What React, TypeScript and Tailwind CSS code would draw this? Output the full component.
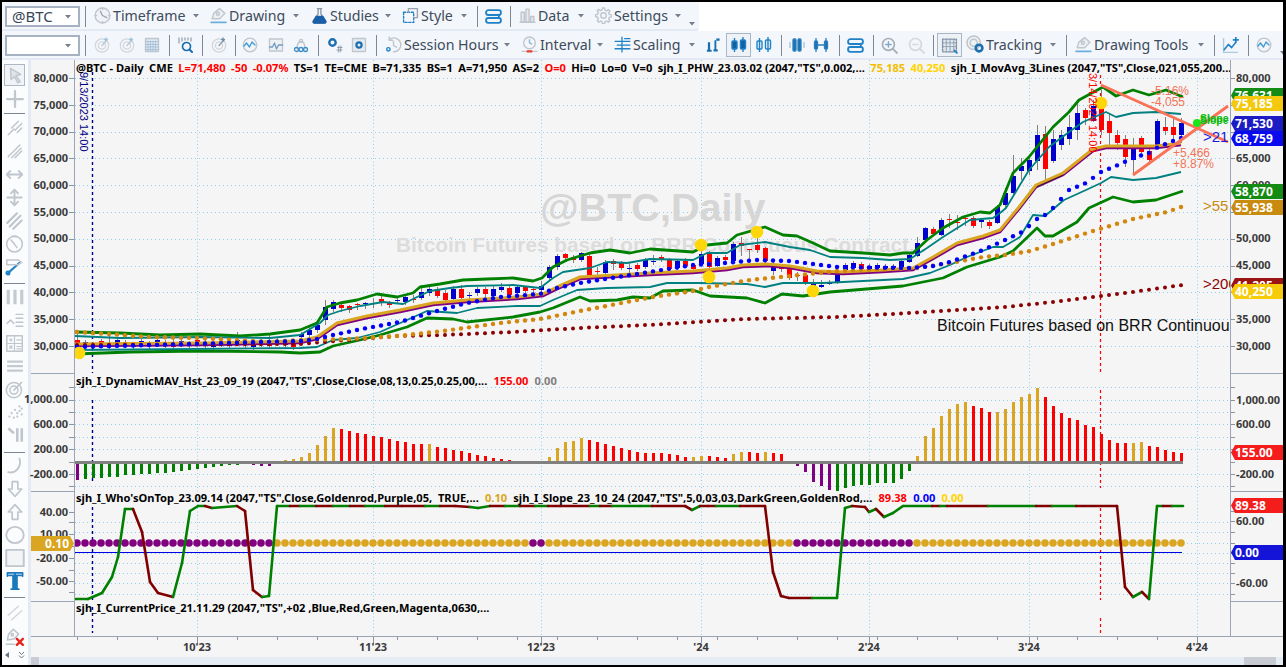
import React from "react";

type P = [number, number];
const lerp = (pts: P[], x: number) => {
  if (x <= pts[0][0]) return pts[0][1];
  for (let i = 1; i < pts.length; i++) {
    if (x <= pts[i][0]) {
      const [a, b] = pts[i - 1];
      const [c, d] = pts[i];
      return b + ((d - b) * (x - a)) / (c - a);
    }
  }
  return pts[pts.length - 1][1];
};
const toPath = (pts: P[]) => "M" + pts.map((p) => p[0] + " " + p[1]).join("L");
const barXs = Array.from({ length: 139 }, (_, i) => 77 + 8 * i);

const greenTop: P[] = [[75,332],[120,333],[160,335],[200,334],[240,336],[270,334],[285,332],[300,330],[317,323],[327,307],[340,303],[357,300],[377,294],[397,297],[413,293],[420,287],[440,284],[463,280],[487,279],[513,278],[533,281],[542,278],[553,267],[567,260],[590,253],[610,250],[630,253],[650,249],[693,252],[707,245],[727,243],[737,235],[765,227],[783,235],[797,236],[813,243],[830,251],[863,253],[890,255],[903,253],[913,253],[927,240],[943,228],[963,217],[980,212],[990,213],[1000,205],[1013,173],[1029,157],[1053,127],[1069,112],[1079,100],[1103,87],[1116,96],[1133,90],[1149,95],[1166,90],[1183,97]];
const tealTop: P[] = [[75,336],[120,338],[200,337],[270,338],[300,335],[320,323],[328,315],[340,311],[360,306],[383,302],[403,304],[417,297],[430,291],[450,288],[467,286],[513,285],[540,288],[553,278],[563,272],[590,268],[607,262],[627,263],[650,259],[693,260],[707,253],[727,253],[740,245],[765,242],[790,247],[810,250],[830,257],[863,258],[890,260],[910,259],[927,248],[943,237],[970,220],[993,218],[1000,213],[1006,208],[1029,170],[1049,147],[1069,132],[1083,122],[1106,112],[1116,117],[1133,113],[1156,112],[1181,114]];
const gold: P[] = [[75,344],[200,343],[300,341],[317,337],[337,323],[367,316],[400,310],[433,303],[467,300],[517,297],[543,294],[557,287],[580,277],[650,273],[693,271],[727,268],[743,265],[767,264],[790,266],[817,271],[843,272],[883,270],[913,268],[933,257],[957,243],[983,236],[1000,230],[1019,207],[1036,185],[1063,173],[1093,149],[1106,146],[1156,146],[1181,143]];
const blackThin: P[] = [[1019,209],[1036,187],[1063,175]];
const blueDots: P[] = [[77,347],[300,341],[317,339],[333,335],[367,328],[400,322],[433,312],[467,303],[500,297],[540,294],[557,288],[580,283],[643,273],[693,265],[725,263],[757,260],[790,261],[837,267],[910,268],[933,266],[950,262],[983,250],[1005,240],[1022,232],[1029,226],[1037,219],[1045,215],[1053,208],[1069,190],[1086,183],[1101,172],[1118,165],[1133,158],[1149,153],[1158,147],[1173,141],[1181,138]];
const tealLow: P[] = [[75,350],[300,348],[317,347],[333,340],[357,338],[380,332],[407,320],[427,311],[457,313],[477,308],[517,306],[540,306],[553,300],[577,290],[607,288],[650,287],[667,283],[700,283],[747,284],[765,287],[783,283],[823,283],[903,279],[930,273],[950,265],[967,257],[993,247],[1003,247],[1020,237],[1033,215],[1045,216],[1064,200],[1086,190],[1101,183],[1111,177],[1133,180],[1156,178],[1181,172]];
const greenLow: P[] = [[75,354],[130,352],[200,351],[280,352],[300,353],[320,352],[333,346],[360,340],[380,335],[407,327],[427,318],[453,319],[467,322],[513,317],[540,312],[553,308],[580,297],[590,301],[617,300],[633,297],[650,298],[663,291],[693,290],[710,296],[747,298],[765,303],[782,294],[803,296],[830,292],[903,286],[943,278],[967,267],[1000,257],[1013,251],[1037,228],[1045,236],[1053,236],[1077,222],[1089,208],[1113,197],[1133,202],[1156,200],[1183,191]];
const orangeDots: P[] = [[77,332],[110,334],[150,337],[197,338],[237,340],[270,342],[300,340],[350,339],[397,336],[443,331],[500,323],[540,319],[580,311],[637,300],[653,297],[693,291],[709,287],[750,280],[790,276],[837,271],[917,268],[950,263],[983,257],[1005,255],[1030,251],[1053,244],[1093,231],[1133,219],[1167,212],[1181,207]];
const redDots: P[] = [[77,345],[300,344],[397,336],[443,335],[513,332],[580,328],[647,325],[747,319],[837,317],[910,313],[1005,307],[1053,302],[1100,296],[1133,292],[1182,285]];

type C = [number, number, number, number, number, number];
const candles: C[] = [
[301,0,334,337,332,341],[309,0,330,335,327,338],[317,0,325,330,320,333],[325,0,307,320,300,325],[333,0,302,309,300,312],[341,1,305,308,302,312],[349,1,306,310,305,313],[357,1,304,305,303,310],[365,0,303,304,302,309],[373,1,303,304,298,308],[381,1,299,303,293,306],[389,1,303,305,301,308],[397,0,300,301,296,304],[405,0,297,302,295,305],[413,1,299,300,295,303],[421,0,292,298,285,300],[429,0,289,293,286,296],[437,1,289,296,287,298],[445,1,293,300,290,302],[453,0,289,299,286,301],[461,1,289,298,285,300],[469,0,295,296,292,301],[477,0,289,293,287,296],[485,1,289,294,287,298],[493,0,289,296,286,297],[501,0,287,290,283,292],[509,1,288,295,286,297],[517,0,287,293,285,294],[525,1,287,291,286,293],[533,1,289,290,288,295],[541,0,286,290,281,295],[549,0,267,278,265,281],[557,0,256,267,254,270],[565,1,254,258,253,261],[573,1,257,260,255,263],[581,0,253,260,252,262],[589,1,256,275,254,276],[597,1,271,272,267,278],[605,0,262,273,260,274],[613,1,261,264,259,270],[621,1,262,268,261,270],[629,0,268,269,263,274],[637,1,265,269,263,271],[645,0,260,267,258,269],[653,0,261,262,255,265],[661,1,257,259,255,262],[669,1,260,269,258,271],[677,0,261,268,259,270],[685,1,261,266,258,268],[693,1,265,269,263,271],[701,0,254,264,250,266],[709,1,254,267,251,270],[717,0,258,266,256,267],[725,1,257,260,255,262],[733,0,244,261,242,263],[741,1,243,246,237,256],[749,1,249,250,249,263],[757,1,245,250,237,253],[765,1,248,261,247,263],[773,0,267,271,262,275],[781,1,266,269,264,272],[789,1,268,278,266,280],[797,1,275,276,272,281],[805,1,275,283,273,285],[813,0,283,286,279,289],[821,0,285,287,280,288],[829,0,283,284,280,285],[837,0,274,283,272,284],[845,0,265,270,263,272],[853,0,263,268,261,270],[861,1,264,269,262,271],[869,0,266,269,264,270],[877,0,265,268,263,270],[885,0,266,269,264,270],[893,0,266,269,264,270],[901,0,261,268,259,269],[909,0,255,262,252,263],[917,0,243,256,237,257],[925,0,228,240,227,241],[933,1,229,234,227,236],[941,0,220,235,218,236],[949,1,219,220,214,228],[957,1,222,223,215,230],[965,1,218,219,215,226],[973,1,218,226,216,228],[981,0,220,222,218,228],[989,1,222,226,220,229],[997,0,207,223,205,224],[1005,0,193,205,188,208],[1013,0,176,193,155,195],[1021,0,166,171,158,180],[1029,0,160,171,155,175],[1037,0,135,161,125,170],[1045,1,134,169,126,180],[1053,0,139,161,130,163],[1061,0,135,145,130,150],[1069,0,127,139,115,145],[1077,0,113,130,100,140],[1085,1,110,118,108,125],[1093,0,106,121,100,122],[1101,1,105,130,90,135],[1109,1,121,133,113,145],[1117,1,135,143,130,150],[1125,1,139,157,135,167],[1133,0,149,160,138,175],[1141,1,138,152,136,157],[1149,1,151,160,145,165],[1157,0,121,146,119,148],[1165,1,127,131,117,135],[1173,1,127,135,117,142],[1181,0,123,135,118,143],
];
const early: C[] = barXs.slice(0, 28).map((x, i) => {
  const t = 340 + ((i * 7) % 5);
  return [x, i % 3 === 0 ? 1 : 0, t, t + 3, t - (i % 4 === 0 ? 8 : 2), t + 6] as C;
});

const histSpec =
  "17p 16n 15n 15n 14n 14n 12n 12n 11n 11n 10n 10n 9n 8n 7n 6n 5n 4n 3n 2n 2n 1n 2p 3p 3p 1u 2u 3u 5u 9u 17u 26u 34u 33r 31r 29r 28r 26r 25r 23r 21r 20r 18r 18r 18u 15r 14r 12r 11r 9r 7r 6r 4r 3r 2r 1r 1r 1p 1p 5u 14u 20u 21u 24u 22r 20r 18r 16r 14r 12r 10r 9r 9r 9r 8r 7r 5r 5u 6u 6r 5r 4r 8u 10u 10r 9r 10u 9r 8r 1r 3p 9p 19p 23p 27p 28n 25n 23n 22n 22n 20n 20n 20n 16n 8n 6u 26u 34u 46u 53u 58u 60u 56r 54r 50r 50u 53u 60u 65u 68u 74u 65r 56r 49r 44r 42r 37r 35r 28r 22r 19r 19r 19u 20u 16r 15r 12r 10r 9r";
const histColor: Record<string, string> = { p: "#800080", n: "#008000", u: "#daa520", r: "#ff0000" };
const hist = histSpec.split(" ").map((s) => {
  const k = s[s.length - 1];
  return { h: parseInt(s), k };
});

type Seg = [number, number, number];
const slope: Seg[] = [
  [75,599,0],[88,599,0],[102,593,0],[112,577,0],[118,557,0],[125,509,0],[133,509,0],[142,532,1],[150,582,1],[158,593,1],[173,597,1],[182,563,0],[190,511,0],[198,506,0],[205,506,0],[212,508,1],[237,506,0],[245,511,1],[253,590,1],[262,597,1],[269,596,0],[277,506,0],
  [290,506,0],[300,506,1],[316,506,0],[333,506,1],[350,506,0],[365,506,1],[385,506,0],[402,506,1],[425,506,1],[440,506,0],[455,506,1],[470,507,1],[478,508,0],[490,506,0],[505,506,1],[520,506,0],[535,506,1],[548,506,0],[560,506,1],[590,506,1],[600,506,0],[612,506,1],[640,506,0],[652,506,0],[685,506,1],[692,510,1],[700,506,0],[708,506,1],[716,506,1],[740,506,0],[765,506,1],[773,572,1],[781,596,1],[789,598,1],[812,598,1],[837,598,0],[845,508,0],[852,506,0],[865,507,1],[869,512,1],[876,509,0],[884,517,1],[893,513,0],[903,506,0],[932,506,0],[940,506,1],[947,506,0],[988,506,1],[1036,506,0],[1052,506,1],[1076,506,0],[1117,506,1],[1125,587,1],[1133,597,1],[1142,592,0],[1149,599,1],[1157,506,0],[1163,506,0],[1172,506,1],[1183,506,0],
];

const purpleDot = (x: number) => x <= 269 || x === 533 || x === 541 || (x >= 797 && x <= 909);
const mainGrid = Array.from({ length: 11 }, (_, i) => 78 + 26.8 * i);
const histGrid = [387, 400, 412, 424, 437, 449, 474, 486];
const slopeGrid = [522, 532, 543, 553, 563, 573, 583, 594];
const months = [197, 373, 541, 701, 869, 1029, 1197];

const Tri = () => (
  <svg width="8" height="5" viewBox="0 0 8 5" className="shrink-0"><path d="M1 1h6L4 4.5z" fill="#75808c" /></svg>
);
const Sep = ({ c }: { c: string }) => <div className={"w-px h-[21px] bg-[#7d8793] shrink-0 " + c} />;

const G = "#c0c6cd";
const B = "#1f82c8";
const Ic = ({ children, c, w = 16, h = 16 }: { children: React.ReactNode; c?: string; w?: number; h?: number }) => (
  <svg width={w} height={h} viewBox="0 0 16 16" fill="none" stroke={G} strokeWidth="1.3" strokeLinecap="round" strokeLinejoin="round" className={"shrink-0 " + (c || "")}>{children}</svg>
);

const Clock = () => <Ic w={17} h={17}><circle cx="8" cy="8" r="7" fill="#f0f2f5" /><path d="M8 8l-2-4M8 8l4 2" stroke="#9aa3ad" /><path d="M8 1v1.4M8 13.6V15M1 8h1.4M13.6 8H15" /></Ic>;
const Pen = () => <Ic w={17} h={17}><path d="M2 11l1.5-5L9 1.5l5 4.5-5 5z" fill="#eceff2" /><circle cx="7.4" cy="6.4" r="1.4" /><path d="M1 14.5h14" stroke="#6aaedb" strokeWidth="1.5" /></Ic>;
const Flask = () => <Ic w={17} h={17}><path d="M6 1.5h4M6.7 1.5v5L2 13.2c-.5 1 .1 1.8 1.1 1.8h9.8c1 0 1.6-.8 1.1-1.8L9.3 6.5v-5" stroke="#8b98a5" /><path d="M4.8 9h6.4l2.6 4.4c.3.8-.2 1.6-1 1.6H3.2c-.8 0-1.3-.8-1-1.6z" fill="#1a5fa8" stroke="#1a5fa8" /></Ic>;
const Style = () => <Ic w={17} h={17}><rect x="1.5" y="5" width="9.5" height="9.5" stroke={B} strokeDasharray="2 1.6" /><path d="M6 5V1.5h8.5V10H11" stroke="#9aa3ad" /></Ic>;
const Stack = () => <Ic w={17} h={17}><rect x="1" y="2" width="14" height="4.6" rx="2.2" stroke={B} strokeWidth="1.7" /><rect x="1" y="9.4" width="14" height="4.6" rx="2.2" stroke={B} strokeWidth="1.7" /><path d="M13 6.6v2.8" stroke={B} strokeWidth="1.7" /></Ic>;
const Bars = () => <Ic w={17} h={17}><path d="M1 14.5h14" /><rect x="2" y="5" width="3" height="9" fill="#e6e9ed" /><rect x="6.5" y="2" width="3" height="12" fill="#e6e9ed" /><rect x="11" y="9" width="3" height="5" fill="#e6e9ed" /></Ic>;
const Gear = () => <Ic w={17} h={17}><circle cx="8" cy="8" r="2.6" /><path d="M7 1h2l.4 2 1.5.6 1.7-1.2 1.4 1.4-1.2 1.7.6 1.5 2 .4v2l-2 .4-.6 1.5 1.2 1.7-1.4 1.4-1.7-1.2-1.5.6-.4 2H7l-.4-2-1.5-.6-1.7 1.2L2 12.8l1.2-1.7-.6-1.5-2-.4V7.2l2-.4.6-1.5L2 3.6l1.4-1.4 1.7 1.2 1.5-.6z" /></Ic>;
const Radar = ({ a }: { a?: boolean }) => <Ic><circle cx="8" cy="8.5" r="6.7" stroke="#d3d7dc" /><circle cx="8" cy="8.5" r="3.6" stroke="#d3d7dc" /><path d="M8 8.5l5-5.5" stroke={a ? "#8fa0ae" : "#b9c6d2"} /><path d="M12 1v3M10.5 2.5h3" stroke={a ? "#6d8ea8" : "#9cc3e0"} /></Ic>;
const Calendar = () => <Ic><rect x="1.5" y="1.5" width="13" height="13" fill="#dde7f1" /><path d="M1.5 4.5h13M4 4.5v10M6.5 4.5v10M9 4.5v10M11.5 4.5v10M1.5 7.5h13M1.5 10h13M1.5 12.5h13" stroke="#a3bdd4" strokeWidth="0.8" /></Ic>;
const Magnify = () => <Ic><circle cx="9.5" cy="9.5" r="4" stroke="#1a6fb0" strokeWidth="1.7" /><path d="M12.5 12.5L15 15" stroke="#1a6fb0" strokeWidth="2" /><path d="M2 1v5M5 1v3M8 1v2M11 1v2M14 1v3" stroke="#9aa3ad" /></Ic>;
const Wave = () => <Ic><circle cx="8" cy="8" r="6.8" fill="#f2f4f6" /><path d="M2 9l2.5-3 3 4 2.5-5 3 3" stroke="#3e9ad8" /></Ic>;
const Chartlet = () => <Ic><path d="M1.5 2h13v12h-13z" fill="#eef1f4" /><path d="M1.5 10h3l2-4 2 6 2-4h4" stroke="#6f9cc4" /></Ic>;
const Nodes = () => <Ic><path d="M4 12C4 2 12 2 12 12" /><circle cx="3.5" cy="12.5" r="2" stroke="#3e8ec8" /><circle cx="8" cy="12.5" r="2" stroke="#3e8ec8" /><circle cx="12.5" cy="12.5" r="2" stroke="#3e8ec8" /><circle cx="8" cy="4" r="1.6" /></Ic>;
const GearHash = () => <Ic><circle cx="5.5" cy="5.5" r="3.2" stroke="#1a6fb0" strokeWidth="2.4" /><path d="M10 13h5M10.5 10.5h4.5M12 9l-.8 6M14 9l-.8 6" stroke="#8b98a5" strokeWidth="0.9" /></Ic>;
const GearBox = () => <Ic><rect x="1.5" y="1.5" width="13" height="13" fill="#e6ebf0" /><circle cx="8" cy="8" r="2.6" stroke="#1a6fb0" strokeWidth="2.2" /></Ic>;
const ClockBack = () => <Ic w={17} h={17}><path d="M4 3.5A6.5 6.5 0 1 1 8 14.8" /><path d="M4 1v3h3" /><path d="M8 5v4l3 1.5" /><circle cx="3.2" cy="12.5" r="1.6" stroke={B} /></Ic>;
const Timer = () => <Ic w={17} h={17}><circle cx="8" cy="6.5" r="5.5" /><path d="M8 3.5v3l2 1" stroke="#8ab8da" /><path d="M1 14.5h3M12 14.5h3M6 14.5h4" stroke={G} /><path d="M6 14.5h4" stroke="#e84030" strokeWidth="2" /></Ic>;
const Scale = () => <Ic w={17} h={17}><path d="M7.5 1v14M1 5h14M3 8.5h12M1 12h14M10 2.5h5" stroke={B} strokeWidth="1.2" /></Ic>;
const Notes = () => <svg width="15" height="16" viewBox="0 0 16 16" fill="#1a6fb0" className="shrink-0"><path d="M2 5h2.4v8H6v2.2H1V13h1zM9 3h2v9.5h1.5V15H8v-2.5h1z" /><path d="M11 1h3.5v2.5H11z" /></svg>;
const Candle = ({ hollow }: { hollow?: boolean }) => (
  <svg width="18" height="18" viewBox="0 0 18 18" className="shrink-0" stroke={B} fill={hollow ? "none" : "#12629f"} strokeWidth="1.4">
    <path d="M4.5 2v14M13 1v15" /><rect x="2" y="5" width="5" height="8" rx="1" /><rect x="10.5" y="4" width="5" height="9" rx="1" />
  </svg>
);
const Thin = ({ v }: { v: number }) => (
  <svg width="16" height="16" viewBox="0 0 16 16" className="shrink-0" stroke="#2a7fbf" strokeWidth="1.3" fill="#1f70ad">
    {v === 0 ? <><path d="M1 5v6M15 5v6" stroke="#9fc3de" /><rect x="4" y="2" width="3" height="12" rx="1" /><rect x="9" y="2" width="3" height="12" rx="1" /></> : <><path d="M3 1v14M13 1v14M5 8h6" /><rect x="1.5" y="4" width="3" height="8" rx="1" /><rect x="11.5" y="4" width="3" height="8" rx="1" /></>}
  </svg>
);
const ZoomIn = ({ minus }: { minus?: boolean }) => <Ic w={17} h={17}><circle cx="7" cy="7" r="5.6" stroke={minus ? "#d5d9de" : "#a7aeb6"} strokeWidth="1.6" /><path d="M11 11l4 4" strokeWidth="1.8" stroke={minus ? "#d5d9de" : "#a7aeb6"} /><path d={minus ? "M4.5 7h5" : "M4.5 7h5M7 4.5v5"} stroke={minus ? "#d5d9de" : "#7fa8c9"} /></Ic>;
const GridSel = () => <Ic w={17} h={17}><rect x="1.5" y="2" width="13" height="12" stroke="#7f93a8" strokeDasharray="1.4 1.2" fill="#dfe6ee" /><path d="M1.5 5.5h13M1.5 9h13M5 2v12M8.5 2v12M12 2v12" stroke="#7f93a8" strokeWidth="0.8" strokeDasharray="1.2 1" /><path d="M12.5 12.5l2.5 2.5" stroke={B} strokeWidth="1.6" /></Ic>;
const Tracking = () => <Ic w={19} h={19}><circle cx="6.5" cy="6.5" r="5.7" fill="#eef1f4" /><circle cx="6.5" cy="6.5" r="3" /><circle cx="11" cy="11" r="2.8" stroke="#1a6fb0" strokeWidth="2.2" /></Ic>;
const TrendPlus = () => <Ic w={17} h={17}><path d="M1.5 1.5v13h13" stroke="#a9c9e2" /><path d="M2 12l4-5 3 3 4-5" stroke={B} strokeWidth="1.5" /><path d="M13 0.5v4.5M10.8 2.7h4.4" stroke={B} strokeWidth="1.6" /></Ic>;

const Combo = ({ label, c }: { label?: string; c: string }) => (
  <div className={"w-[75px] h-[21px] border-2 border-[#a6b2c1] bg-white flex items-center pl-[5px] pr-[6px] justify-between shrink-0 " + c}>
    <span className="text-[15px] text-[#37475a]">{label}</span>
    <Tri />
  </div>
);
const Item = ({ icon, label, c }: { icon: React.ReactNode; label: string; c: string }) => (
  <div className={"flex items-center pr-[1px] shrink-0 " + c}>
    <div className="w-[17px] flex justify-center shrink-0">{icon}</div>
    <span className="ml-[2px] text-[14.2px] text-[#3d4b5c] whitespace-nowrap">{label}</span>
    <div className="ml-auto"><Tri /></div>
  </div>
);

const AxisL = ({ y, t, off, c }: { y: number; t: string; off: number; c: string }) => (
  <span className={"absolute text-[11px] leading-[12px] font-bold text-[#3a3a3a] whitespace-nowrap " + c} style={{ top: y - 6 - off }}>{t}</span>
);
const Pane = ({ c }: { c: string }) => <div className={"shrink-0 border-b border-[#9aa5b5] " + c} />;

const Tag = ({ y, t, c }: { y: number; t: string; c: string }) => (
  <div className={"absolute left-0 w-[52px] h-[15px] text-[12px] leading-[15px] font-bold text-white pl-[4px] [clip-path:polygon(4px_0,100%_0,100%_100%,4px_100%,0_50%)] " + c} style={{ top: y - 60 }}>{t}</div>
);

const Lg = ({ c, children }: { c?: string; children: React.ReactNode }) => <span className={"whitespace-pre " + (c || "text-black")}>{children}</span>;

const leftIcons = [
  <Ic w={18} h={18}><path d="M4 2l9 5.5-4 1 3.5 5.5-2 1-3-5.5L4.5 12z" fill="#dfe3e8" /></Ic>,
  <Ic w={18} h={18}><path d="M8 1v14M1 8h14" strokeWidth="2" /></Ic>,
];

function LeftBar() {
  const I = ({ children }: { children: React.ReactNode }) => <div className="h-[23px] flex items-center justify-center shrink-0">{children}</div>;
  const S = ({ c }: { c: string }) => <div className={"h-px bg-[#7d8793] mx-[2px] shrink-0 " + c} />;
  return (
    <div className="w-[29px] shrink-0 bg-[#fbfcfe] border-r-[3px] border-[#e3eaf3] flex flex-col pr-[1px] pt-[4px]">
      <div className="h-[22px] mx-[2px] border border-[#aeb8c4] bg-[#f1f3f6] flex items-center justify-center shrink-0">{leftIcons[0]}</div>
      <div className="h-[23px] mt-px flex items-center justify-center shrink-0">{leftIcons[1]}</div>
      <S c="mt-[3px]" />
      <div className="mt-[2.5px]" />
      <I><Ic w={18} h={18}><path d="M2 14l5-5M5 8l6-6M8 10l6-6M10 12l4-4" /></Ic></I>
      <I><Ic w={18} h={18}><path d="M2 13L13 2M5 14L14 5M8 14l6-6" strokeDasharray="1.6 1" /></Ic></I>
      <I><Ic w={19} h={19}><path d="M1.5 8h13M1.5 8l3-3M1.5 8l3 3M14.5 8l-3-3M14.5 8l-3 3" strokeWidth="1.6" /></Ic></I>
      <I><Ic w={19} h={19}><path d="M8 1.5v13M8 1.5L5 4.5M8 1.5l3 3M8 14.5l-3-3M8 14.5l3-3M2 8h12" strokeWidth="1.6" /></Ic></I>
      <I><Ic w={19} h={19}><path d="M2 10l8-8M4 13l9-9M7 15l7-7" strokeWidth="1.8" /></Ic></I>
      <I><Ic w={19} h={19}><circle cx="8" cy="8.5" r="6.6" /><path d="M8 8.5L5 5M8 8.5l2 3M6 2h4" /></Ic></I>
      <I><Ic w={19} h={19}><path d="M2 14L12 5" stroke={B} strokeWidth="1.7" /><circle cx="2.5" cy="13.5" r="1.5" stroke={B} /><path d="M1.5 2.5h9.5l3 2-3 2H1.5z" /></Ic></I>
      <S c="mt-[5.5px]" />
      <div className="mt-[1.5px]" />
      <I><Ic w={18} h={18}><path d="M2 1.5v13M8 1.5v13M14 1.5v13" strokeWidth="2.8" strokeLinecap="butt" stroke="#c5cad0" /></Ic></I>
      <I><Ic w={18} h={18}><path d="M1 11l3-3 3 3M9 3h6M9 6.5h6M9 10h6M9 13.5h6" /></Ic></I>
      <I><Ic w={19} h={19}><rect x="1.5" y="1.5" width="13" height="13" /><path d="M8 1.5v13M1.5 8h13M4 5h2M5 4v2M10 5h3M4 10l2 2M6 10l-2 2M10 10.5h3M10 12.5h3" strokeWidth="1" /></Ic></I>
      <I><Ic w={18} h={18}><path d="M1 4h14M1 8h14M1 12h14" strokeWidth="2" strokeLinecap="butt" stroke="#c5cad0" /></Ic></I>
      <I><Ic w={19} h={19}><circle cx="7.5" cy="8.5" r="6.4" /><circle cx="7.5" cy="8.5" r="3.4" /><path d="M7.5 8.5L14 2" /></Ic></I>
      <I><Ic w={18} h={18}><path d="M3 12v.1M5 9v.1M7 13v.1M8 6v.1M10 9v.1M10 12v.1M12 3v.1M12 7v.1M14 5v.1M14 10v.1" strokeWidth="2" /></Ic></I>
      <I><Ic w={18} h={18}><path d="M2 2l5 4.5M10 2v12M14 2v12" strokeWidth="2.3" strokeLinecap="butt" /></Ic></I>
      <S c="mt-[5.5px]" />
      <div className="mt-[1.5px]" />
      <I><Ic w={18} h={18}><path d="M12 1.5C14 8 9 15 2 13.5" strokeWidth="1.7" /></Ic></I>
      <I><Ic w={18} h={18}><path d="M5.5 1.5h5v6.5h3.5l-6 6.5-6-6.5h3.5z" strokeWidth="1.5" /></Ic></I>
      <I><Ic w={18} h={18}><path d="M5.5 14.5h5V8h3.5l-6-6.5L2 8h3.5z" strokeWidth="1.5" /></Ic></I>
      <I><Ic w={20} h={20}><ellipse cx="8" cy="8" rx="7" ry="6.5" strokeWidth="1.5" /></Ic></I>
      <I><Ic w={20} h={20}><rect x="1" y="1.5" width="14" height="13" strokeWidth="1.5" fill="#f2f4f6" /></Ic></I>
      <I><Ic w={20} h={20}><path d="M2 4V1.5h12V4M8 1.5v13M5 14.5h6M3.5 3.5h9M6.5 3.5v10M9.5 3.5v10" stroke="#1a78bd" strokeWidth="1.5" /></Ic></I>
      <S c="mt-[4.5px]" />
      <div className="mt-[3.5px]" />
      <I><Ic w={18} h={18}><path d="M2 10l9-8M5 14l9-8" strokeWidth="1.3" stroke="#d3d7dc" /></Ic></I>
      <I><Ic w={19} h={19}><path d="M2 11l1-5 4-4 4.5 4-4 4z" /><circle cx="6.2" cy="6.5" r="1" /><path d="M1 14.5h7" /><path d="M10 10l5 5M15 10l-5 5" stroke="#e8281e" strokeWidth="2" /></Ic></I>
      <div className="mt-[3px] flex items-center justify-center gap-[9px]">
        <svg width="4" height="6" viewBox="0 0 4 6"><path d="M4 0v6L0 3z" fill="#69747f" /></svg>
        <svg width="7" height="8" viewBox="0 0 7 8" fill="none" stroke="#69747f"><path d="M1 1l2.5 2.5L6 1M1 4.5L3.5 7 6 4.5" /></svg>
      </div>
    </div>
  );
}

function Plot() {
  const T = "#f27458";
  return (
    <div className="relative w-[1155px] h-[576px] bg-[#f5f5f5] overflow-hidden shrink-0">
      <svg viewBox="75 60 1155 576" width="1155" height="576" className="block">
        <defs>
          <clipPath id="p3"><rect x="75" y="492" width="1155" height="112" /></clipPath>
        </defs>
        {[...mainGrid, ...histGrid, ...slopeGrid].map((y, i) => (
          <line key={i} x1="75" x2="1230" y1={Math.round(y) + 0.5} y2={Math.round(y) + 0.5} stroke="#8fd0f2" strokeWidth="1" strokeDasharray="1 3" />
        ))}
        {months.map((x) => (
          <line key={x} x1={x + 0.5} x2={x + 0.5} y1="60" y2="636" stroke="#8fd0f2" strokeWidth="1" strokeDasharray="1 2.5" />
        ))}
        <text x="540" y="221" fontFamily="'Liberation Sans',Arial,sans-serif" fontWeight="700" fontSize="39.6" fill="#d6d6d6">@BTC,Daily</text>
        <text x="396" y="252" fontFamily="'Liberation Sans',Arial,sans-serif" fontWeight="700" fontSize="20.8" fill="#dcdcdc">Bitcoin Futures based on BRR Continuous Contract...</text>

        <path d="M92.5 72V373M92.5 400V482M92.5 507V600M92.5 607V633" stroke="#00008b" strokeWidth="1.4" strokeDasharray="3 3" fill="none" />
        <path d="M1100.5 75V373M1100.5 390V488M1100.5 508V600M1100.5 618V636" stroke="#ff0000" strokeWidth="1.2" strokeDasharray="3 3" fill="none" />

        {[...early, ...candles].map(([x, c, t, b, wt, wb]) => (
          <g key={x} shapeRendering="crispEdges">
            <rect x={x - 0.5} y={wt} width="1.5" height={wb - wt} fill="#808080" />
            <rect x={x - 2.5} y={t} width="5.5" height={Math.max(b - t, 1)} fill={c ? "#ff0000" : "#0000cd"} />
          </g>
        ))}

        <path d={toPath(greenLow)} fill="none" stroke="#008000" strokeWidth="2.8" strokeLinejoin="round" />
        <path d={toPath(greenTop)} fill="none" stroke="#008000" strokeWidth="2.8" strokeLinejoin="round" />
        <path d={toPath(tealLow)} fill="none" stroke="#008080" strokeWidth="1.8" strokeLinejoin="round" />
        <path d={toPath(tealTop)} fill="none" stroke="#008080" strokeWidth="1.8" strokeLinejoin="round" />
        <path d={toPath(gold.map(([x, y]) => [x, y + 1.8] as P))} fill="none" stroke="#800080" strokeWidth="3" />
        <path d={toPath(blackThin)} fill="none" stroke="#222" strokeWidth="1" />
        <path d={toPath(gold)} fill="none" stroke="#daa520" strokeWidth="3" strokeLinejoin="round" />

        {barXs.map((x) => <circle key={x} cx={x} cy={lerp(redDots, x)} r="2" fill="#8b0000" />)}
        {barXs.map((x) => <circle key={x} cx={x} cy={lerp(orangeDots, x)} r="2.2" fill="#d4860b" />)}
        {barXs.map((x) => <circle key={x} cx={x} cy={lerp(blueDots, x)} r="2.2" fill="#0000ff" />)}

        {[[79, 353], [701, 245], [709, 277], [757, 232], [813, 291], [1101, 103]].map(([x, y]) => (
          <circle key={x} cx={x} cy={y} r="6.3" fill="#ffd60a" />
        ))}

        <path d="M1101 85L1228 142M1133 175L1228 106" stroke="#fa7258" strokeWidth="2.8" fill="none" />
        <g fontFamily="'Liberation Sans',Arial,sans-serif" fontSize="12" fill={T}>
          <text x="1151" y="95">-5.16%</text>
          <text x="1151" y="106">-4,055</text>
          <text x="1173" y="157">+5,466</text>
          <text x="1173" y="168">+8.87%</text>
        </g>
        <circle cx="1197" cy="123" r="4" fill="#19e619" />
        <text x="1200" y="124" fontFamily="'Liberation Sans',Arial,sans-serif" fontWeight="700" fontSize="10.5" fill="#11bb11">Slope</text>
        <text x="1200" y="122" fontFamily="'Liberation Sans',Arial,sans-serif" fontWeight="700" fontSize="10.5" fill="#11bb11">Slope</text>
        <g fontFamily="'Liberation Sans',Arial,sans-serif" fontSize="15">
          <text x="1203" y="142" fill="#1a1ae0">&gt;21</text>
          <text x="1203" y="211" fill="#c98a10">&gt;55</text>
          <text x="1203" y="289" fill="#8b0000">&gt;200</text>
        </g>
        <text x="937" y="331" fontFamily="'Liberation Sans',Arial,sans-serif" fontSize="16" fill="#111">Bitcoin Futures based on BRR Continuou</text>

        <g transform="translate(80 72) rotate(90)"><text fontFamily="'Liberation Sans',Arial,sans-serif" fontSize="11" fill="#000080">9/13/2023 14:00</text></g>
        <g transform="translate(1089 73) rotate(90)"><text fontFamily="'Liberation Sans',Arial,sans-serif" fontSize="11" fill="#ff0000">3/14/2024 14:00</text></g>

        <g shapeRendering="crispEdges">
          {hist.map((b, i) => {
            const x = 76 + 8 * i;
            return b.k === "n" || b.k === "p"
              ? <rect key={i} x={x} y={462} width="3" height={b.h + 1} fill={histColor[b.k]} />
              : <rect key={i} x={x} y={462 - b.h} width="3" height={b.h} fill={histColor[b.k]} />;
          })}
          <rect x="75" y="461" width="1108" height="3" fill="#808080" />
        </g>

        <line x1="75" x2="1182" y1="552.5" y2="552.5" stroke="#0000e6" strokeWidth="1" />
        {barXs.map((x) => <circle key={x} cx={x} cy="543" r="3.8" fill={purpleDot(x) ? "#800080" : "#daa520"} />)}
        <g clipPath="url(#p3)">
          {slope.slice(1).map((s, i) => (
            <line key={i} x1={slope[i][0]} y1={slope[i][1]} x2={s[0]} y2={s[1]} stroke={s[2] ? "#800000" : "#008000"} strokeWidth="2.6" strokeLinecap="round" />
          ))}
        </g>
      </svg>

      <div className="absolute left-[1px] top-[2px] flex gap-[5.4px] text-[11.1px] leading-[12px] font-bold">
        <Lg>@BTC - Daily</Lg><Lg>CME</Lg><Lg c="text-[#ff0000]">L=71,480</Lg><Lg c="text-[#ff0000]">-50</Lg><Lg c="text-[#ff0000]">-0.07%</Lg><Lg>TS=1</Lg><Lg>TE=CME</Lg><Lg>B=71,335</Lg><Lg>BS=1</Lg><Lg>A=71,950</Lg><Lg>AS=2</Lg><Lg c="text-[#ff0000]">O=0</Lg><Lg>Hi=0</Lg><Lg>Lo=0</Lg><Lg>V=0</Lg><Lg>sjh_I_PHW_23.03.02 (2047,"TS",0.002,...</Lg><Lg c="text-[#f0c000]">75,185</Lg><Lg c="text-[#ffd400]">40,250</Lg><Lg>sjh_I_MovAvg_3Lines (2047,"TS",Close,021,055,200...</Lg>
      </div>
      <div className="absolute left-[1px] top-[315px] flex gap-[6.2px] text-[11.1px] leading-[12px] font-bold">
        <Lg>sjh_I_DynamicMAV_Hst_23_09_19 (2047,"TS",Close,Close,08,13,0.25,0.25,00,...</Lg><Lg c="text-[#ff0000]">155.00</Lg><Lg c="text-[#808080]">0.00</Lg>
      </div>
      <div className="absolute left-[1px] top-[432px] flex gap-[6.2px] text-[11.1px] leading-[12px] font-bold">
        <Lg>sjh_I_Who'sOnTop_23.09.14 (2047,"TS",Close,Goldenrod,Purple,05,  TRUE,...</Lg><Lg c="text-[#daa520]">0.10</Lg><Lg>sjh_I_Slope_23_10_24 (2047,"TS",5,0,03,03,DarkGreen,GoldenRod,...</Lg><Lg c="text-[#ff0000]">89.38</Lg><Lg c="text-[#0000ff]">0.00</Lg><Lg c="text-[#ffd400]">0.00</Lg>
      </div>
      <div className="absolute left-[1px] top-[542px] text-[11.1px] leading-[12px] font-bold">
        <Lg>sjh_I_CurrentPrice_21.11.29 (2047,"TS",+02 ,Blue,Red,Green,Magenta,0630,...</Lg>
      </div>
    </div>
  );
}

const leftTicks = [...mainGrid, 387, 400, 412, 424, 437, 449, 462, 474, 486, 512, 522, 534, 546, 558, 570, 581, 592];
const rightTicks = [...mainGrid, 387, 400, 412, 424, 437, 449, 462, 474, 486, 511, 521, 532, 543, 553, 563, 573, 583, 594];

export default function App() {
  return (
    <div className="w-[1286px] h-[667px] bg-black pt-[2px] pb-[2px] pl-[2px] pr-[3px] overflow-hidden font-['Open_Sans','Noto_Sans',sans-serif]">
      <div className="w-full h-full bg-white flex flex-col overflow-hidden">
        <div className="h-[29px] w-[697px] shrink-0 flex items-center bg-[#f3f6fa] border-b-[2px] border-[#e3eaf3] rounded-br-[3px] pt-[1px]">
          <Combo label="@BTC" c="ml-[3px]" />
          <Sep c="ml-[5px]" />
          <Item icon={<Clock />} label="Timeframe" c="ml-[8px] w-[107px]" />
          <Item icon={<Pen />} label="Drawing" c="ml-[9px] w-[91px]" />
          <Item icon={<Flask />} label="Studies" c="ml-[10px] w-[82px]" />
          <Item icon={<Style />} label="Style" c="ml-[9px] w-[67px]" />
          <Sep c="ml-[8px]" />
          <div className="ml-[7px]"><Stack /></div>
          <Sep c="ml-[8px]" />
          <Item icon={<Bars />} label="Data" c="ml-[8px] w-[67px]" />
          <Item icon={<Gear />} label="Settings" c="ml-[9px] w-[88px]" />
          <div className="ml-[5px] self-end mb-[3px]"><Tri /></div>
        </div>
        <div className="h-[29px] shrink-0 flex items-center bg-[#f3f6fa] border-b-[2px] border-[#e3eaf3] pt-[1px]">
          <Combo c="ml-[3px]" />
          <Sep c="ml-[5px]" />
          <div className="ml-[8px]"><Radar /></div>
          <div className="ml-[9px]"><Radar /></div>
          <div className="ml-[9px]"><Calendar /></div>
          <Sep c="ml-[9px]" />
          <div className="ml-[7px]"><Magnify /></div>
          <Sep c="ml-[9px]" />
          <div className="ml-[8px]"><Radar a /></div>
          <Sep c="ml-[8px]" />
          <div className="ml-[6px]"><Wave /></div>
          <div className="ml-[10px]"><Chartlet /></div>
          <div className="ml-[9px]"><Nodes /></div>
          <Sep c="ml-[9px]" />
          <div className="ml-[8px]"><GearHash /></div>
          <div className="ml-[8px]"><GearBox /></div>
          <Sep c="ml-[9px]" />
          <Item icon={<ClockBack />} label="Session Hours" c="ml-[8px] w-[127px]" />
          <Item icon={<Timer />} label="Interval" c="ml-[9px] w-[84px]" />
          <Item icon={<Scale />} label="Scaling" c="ml-[9px] w-[83px]" />
          <div className="ml-[9px]"><Notes /></div>
          <div className="ml-[5px] w-[25px] h-[24px] border border-[#a9b6c6] bg-[#eef2f6] flex items-center justify-center shrink-0"><Candle /></div>
          <div className="ml-[4px]"><Candle hollow /></div>
          <Sep c="ml-[8px]" />
          <div className="ml-[7px]"><Thin v={0} /></div>
          <div className="ml-[8px]"><Thin v={1} /></div>
          <Sep c="ml-[10px]" />
          <div className="ml-[7px]"><Stack /></div>
          <Sep c="ml-[9px]" />
          <div className="ml-[7px]"><ZoomIn /></div>
          <div className="ml-[10px]"><ZoomIn minus /></div>
          <Sep c="ml-[8px]" />
          <div className="ml-[3px] w-[25px] h-[24px] border border-[#a9b6c6] bg-[#eef2f6] flex items-center justify-center shrink-0"><GridSel /></div>
          <Item icon={<Tracking />} label="Tracking" c="ml-[5px] w-[91px]" />
          <Sep c="ml-[8px]" />
          <Item icon={<Pen />} label="Drawing Tools" c="ml-[8px] w-[131px]" />
          <Sep c="ml-[8px]" />
          <div className="ml-[7px]"><TrendPlus /></div>
          <Sep c="ml-[9px]" />
          <div className="ml-[7px]"><Wave /></div>
          <div className="ml-[7px] self-end mb-[3px]"><Tri /></div>
        </div>

        <div className="h-[605px] shrink-0 flex bg-[#f5f5f5]">
          <LeftBar />
          <div className="flex-1 flex flex-col min-w-0 font-['Liberation_Sans',Arial,sans-serif]">
            <div className="flex h-[576px] shrink-0 border-b border-[#9aa5b5] box-content">
              <div className="relative w-[44px] shrink-0 border-r border-[#9aa5b5] flex flex-col">
                <Pane c="h-[314px]" />
                <Pane c="h-[118px]" />
                <Pane c="h-[110px]" />
                <svg viewBox="31 60 43 576" width="43" height="576" className="absolute left-0 top-0">
                  {leftTicks.map((y, i) => <line key={i} x1="69" x2="74" y1={Math.round(y) + 0.5} y2={Math.round(y) + 0.5} stroke="#8a94a3" />)}
                </svg>
                {[["80,000",78],["75,000",105],["70,000",131],["65,000",158],["60,000",185],["55,000",212],["50,000",238],["45,000",265],["40,000",292],["35,000",319],["30,000",346],["1,000.00",399],["600.00",424],["200.00",449],["-200.00",474],["40.00",512],["10.00",534],["-20.00",558],["-50.00",581]].map(([t, y]) => (
                  <AxisL key={t as string} t={t as string} y={y as number} off={60} c="right-[6px]" />
                ))}
                <div className="absolute left-0 top-[476px] w-[43px] h-[15px] bg-[#daa520] text-white font-bold text-[12px] leading-[15px] text-right pr-[5px] [clip-path:polygon(0_0,39px_0,100%_50%,39px_100%,0_100%)]">0.10</div>
              </div>
              <Plot />
              <div className="relative flex-1 border-l border-[#9aa5b5] flex flex-col">
                <Pane c="h-[314px]" />
                <Pane c="h-[118px]" />
                <Pane c="h-[110px]" />
                <svg viewBox="1231 60 52 576" width="52" height="576" className="absolute left-0 top-0">
                  {rightTicks.map((y, i) => <line key={i} x1="1231" x2="1235" y1={Math.round(y) + 0.5} y2={Math.round(y) + 0.5} stroke="#8a94a3" />)}
                </svg>
                {[["80,000",78],["65,000",158],["60,000",185],["50,000",238],["45,000",265],["35,000",319],["30,000",346],["1,000.00",400],["600.00",424],["-200.00",474],["60.00",521],["-60.00",583]].map(([t, y]) => (
                  <AxisL key={t as string} t={t as string} y={y as number} off={60} c="left-[5px]" />
                ))}
                <Tag y={88} t="76,631" c="bg-[#148c14]" />
                <Tag y={96} t="75,185" c="bg-[#f4c80c]" />
                <Tag y={116} t="71,530" c="bg-[#1c1cc4]" />
                <Tag y={131} t="68,759" c="bg-[#0a0af0]" />
                <Tag y={184} t="58,870" c="bg-[#148c14]" />
                <Tag y={200} t="55,938" c="bg-[#c98a10]" />
                <Tag y={278} t="41,205" c="bg-[#9a1414]" />
                <Tag y={284} t="40,250" c="bg-[#f6cc0a]" />
                <Tag y={445} t="155.00" c="bg-[#f51c1c]" />
                <Tag y={498} t="89.38" c="bg-[#f51c1c]" />
                <Tag y={545} t="0.00" c="bg-[#1414d8]" />
              </div>
            </div>
            <div className="relative h-[20px] shrink-0">
              <svg viewBox="31 637 1252 20" width="1252" height="20" className="absolute left-0 top-0">
                {barXs.filter((x) => (x - 77) % 40 === 0).map((x) => <line key={x} x1={x + 0.5} x2={x + 0.5} y1="637" y2="640" stroke="#8a94a3" />)}
                {months.map((x) => <line key={x} x1={x + 0.5} x2={x + 0.5} y1="637" y2="643" stroke="#8a94a3" />)}
              </svg>
              {[["10'23",197],["11'23",373],["12'23",541],["'24",701],["2'24",869],["3'24",1029],["4'24",1197]].map(([t, x]) => (
                <span key={t as string} className="absolute top-[4px] -translate-x-1/2 text-[11px] leading-[12px] font-bold text-[#3a3a3a]" style={{ left: (x as number) - 31 }}>{t}</span>
              ))}
            </div>
            <div className="h-[8px] shrink-0 bg-[#e6ecf3] flex justify-between">
              <div className="w-[8px] h-full bg-[#c8ccd2]" />
              <div className="w-[32px] h-full bg-[#c8ccd2] mr-[7px]" />
            </div>
          </div>
        </div>
      </div>
    </div>
  );
}
